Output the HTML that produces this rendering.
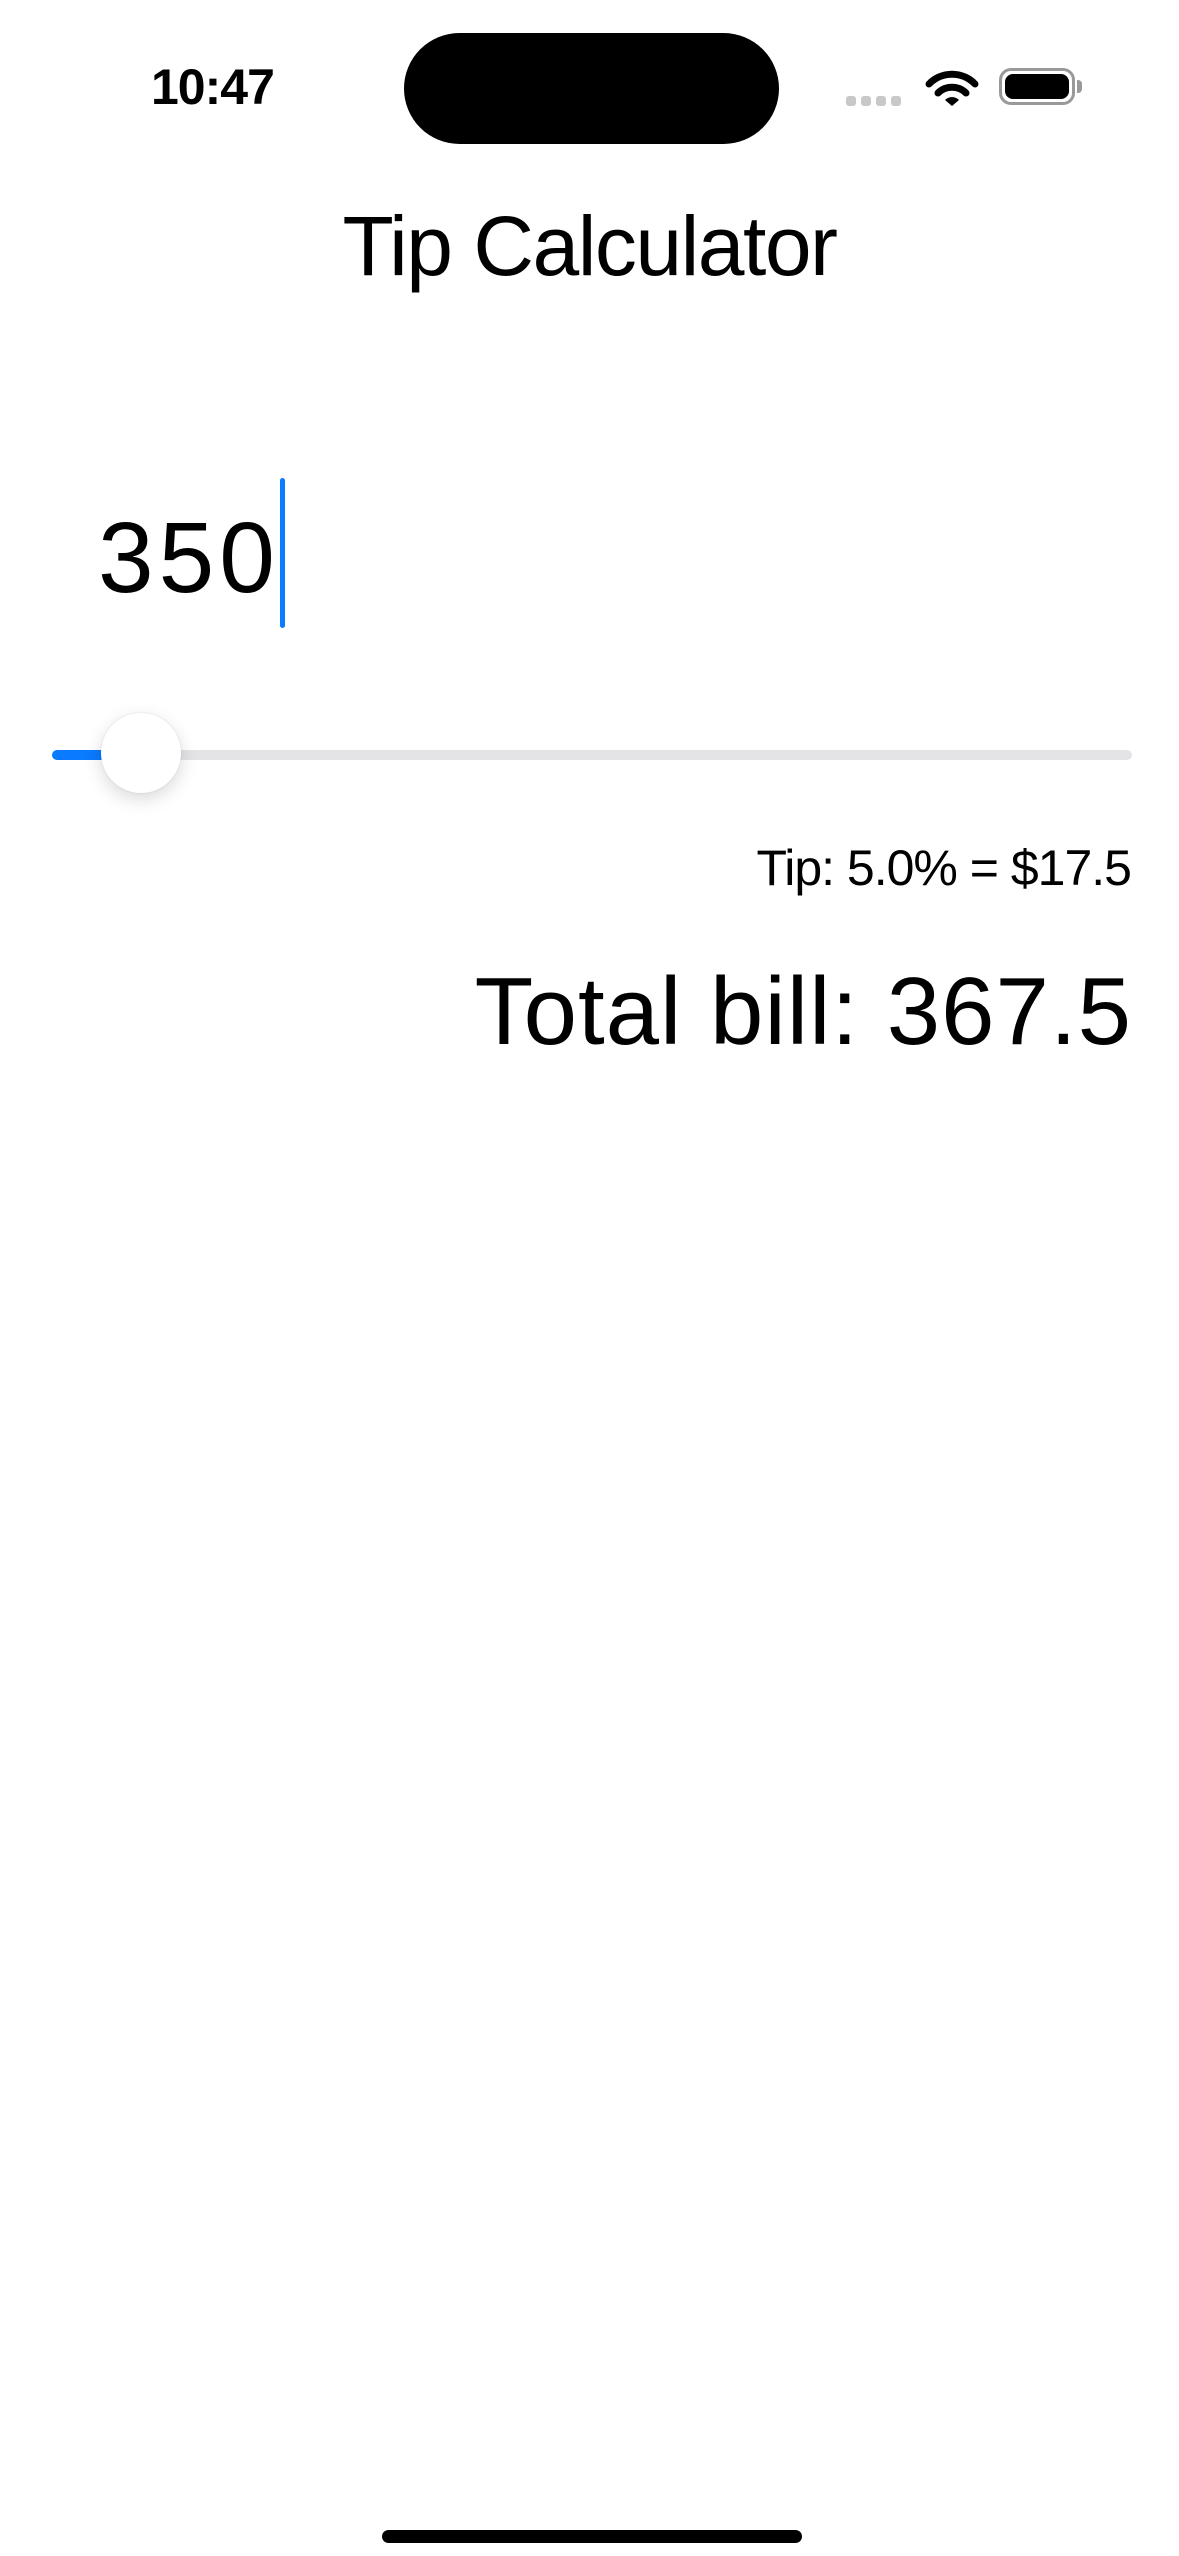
<!DOCTYPE html>
<html><head><meta charset="utf-8"><style>
html,body{margin:0;padding:0;background:#fff;}
body{width:1179px;height:2556px;position:relative;overflow:hidden;font-family:"Liberation Sans",sans-serif;color:#000;}
.a{position:absolute;line-height:1;white-space:nowrap;}
</style></head><body>
<div class="a" style="left:151px;top:62px;font-size:50px;font-weight:bold;letter-spacing:-1px;">10:47</div>
<div class="a" style="left:404px;top:33px;width:375px;height:111px;border-radius:56px;background:#000;"></div>
<div class="a" style="left:846px;top:96px;width:10px;height:10px;border-radius:3px;background:#c8c8c8;"></div>
<div class="a" style="left:861px;top:96px;width:10px;height:10px;border-radius:3px;background:#c8c8c8;"></div>
<div class="a" style="left:876px;top:96px;width:10px;height:10px;border-radius:3px;background:#c8c8c8;"></div>
<div class="a" style="left:891px;top:96px;width:10px;height:10px;border-radius:3px;background:#c8c8c8;"></div>
<svg class="a" style="left:925px;top:66px" width="54" height="42" viewBox="0 0 54 42">
<path d="M4 18 A32 32 0 0 1 50 18" stroke="#000" stroke-width="7" fill="none" stroke-linecap="round"/>
<path d="M13 27 A20 20 0 0 1 41 27" stroke="#000" stroke-width="7" fill="none" stroke-linecap="round"/>
<path d="M20 34 L27 40 L34 34 A10 10 0 0 0 20 34Z" fill="#000"/>
</svg>
<div class="a" style="left:999px;top:68px;width:70px;height:31px;border:3px solid #999;border-radius:12px;"></div>
<div class="a" style="left:1005px;top:74px;width:64px;height:25px;border-radius:8px;background:#000;"></div>
<div class="a" style="left:1077px;top:80px;width:5px;height:13px;border-radius:0 4px 4px 0;background:#999;"></div>

<div class="a" style="left:0;width:1179px;text-align:center;top:204px;font-size:84px;letter-spacing:-1.5px;">Tip Calculator</div>
<div class="a" style="left:98px;top:508px;font-size:100px;letter-spacing:5px;">350</div>
<div class="a" style="left:280px;top:478px;width:5px;height:150px;border-radius:3px;background:#0a7aff;"></div>

<div class="a" style="left:52px;top:750px;width:1080px;height:10px;border-radius:5px;background:#e4e4e6;"></div>
<div class="a" style="left:52px;top:750px;width:90px;height:10px;border-radius:5px;background:#0a7aff;"></div>
<div class="a" style="left:101px;top:713px;width:80px;height:80px;border-radius:50%;background:#fff;box-shadow:0 6px 18px rgba(0,0,0,0.15),0 0 2px rgba(0,0,0,0.1);"></div>

<div class="a" style="right:48px;top:843px;font-size:50px;letter-spacing:-1px;">Tip: 5.0% = $17.5</div>
<div class="a" style="right:47px;top:964px;font-size:96px;letter-spacing:1px;">Total bill: 367.5</div>

<div class="a" style="left:382px;top:2530px;width:420px;height:13px;border-radius:7px;background:#000;"></div>
</body></html>
